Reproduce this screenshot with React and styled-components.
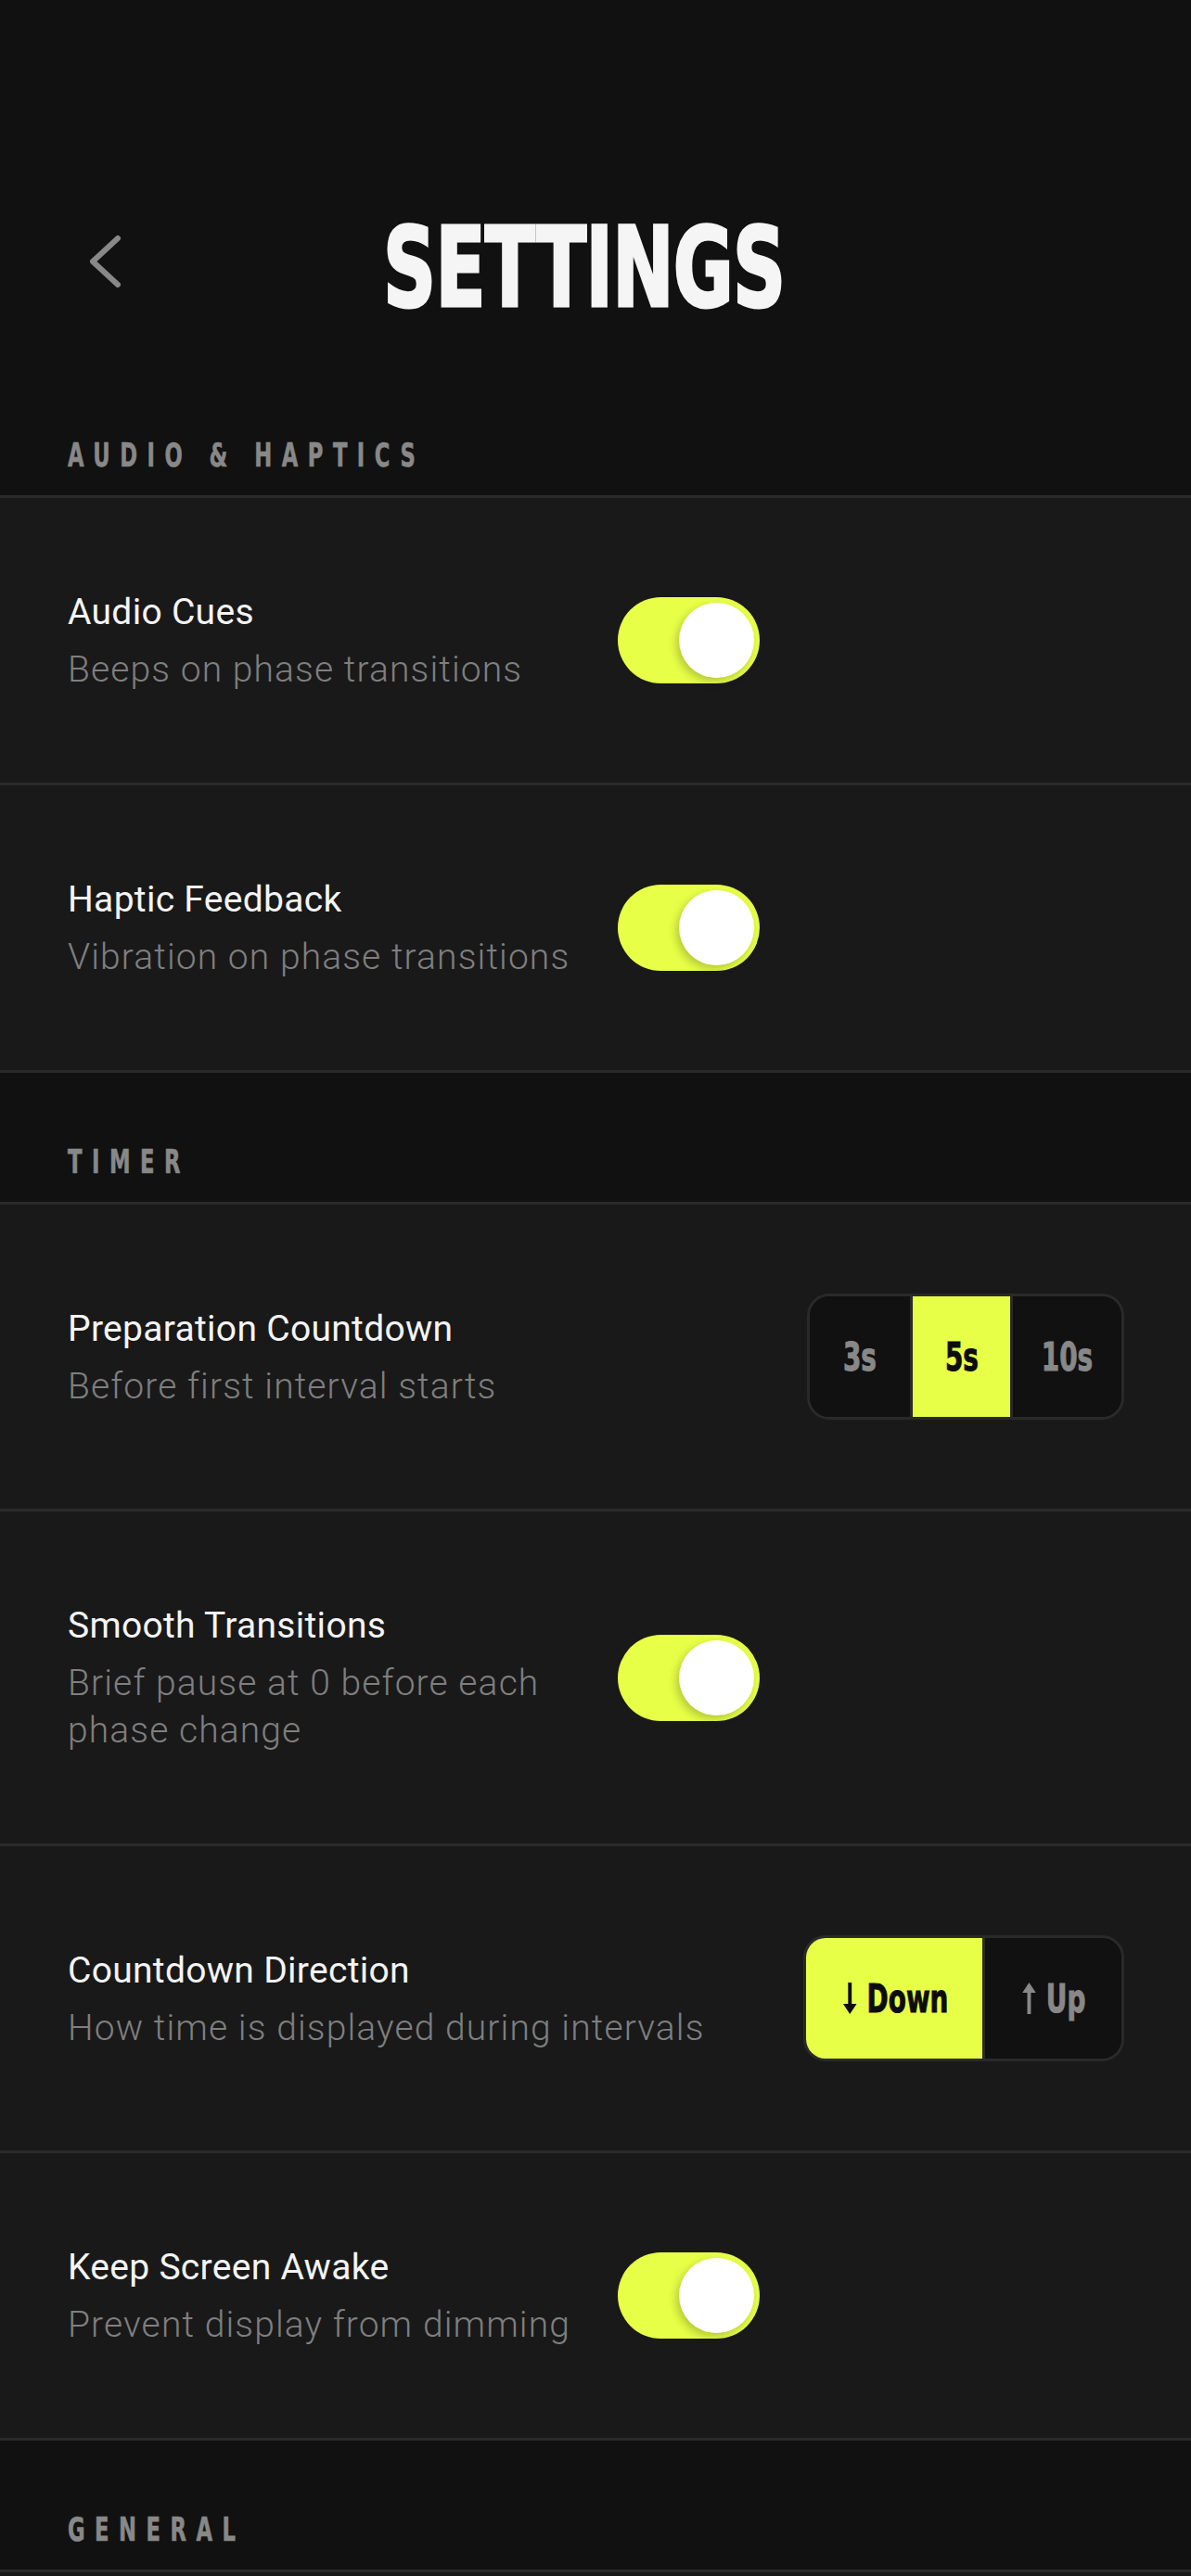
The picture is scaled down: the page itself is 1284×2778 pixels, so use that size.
import React from "react";
import styled, { createGlobalStyle } from "styled-components";

const COND = `"DejaVu Sans Condensed", "DejaVu Sans", sans-serif`;
const BODY = `Roboto, "Liberation Sans", sans-serif`;
const ACCENT = "#e7ff47";

const GlobalStyle = createGlobalStyle`
  html, body { margin: 0; padding: 0; background: #111111; }
  body { font-family: ${BODY}; -webkit-font-smoothing: antialiased; }
  *, *::before, *::after { box-sizing: border-box; }
  button { font: inherit; }
`;

const Page = styled.div`
  min-height: 2778px;
  background: #111111;
`;

const Header = styled.header`
  display: grid;
  grid-template-columns: 132px 1fr 156px;
  align-items: start;
  padding: 230px 72px 46px;
`;

const BackButton = styled.button`
  background: none;
  border: 0;
  padding: 23px 0 0 24px;
  display: flex;
  justify-content: flex-start;
  cursor: pointer;
  color: #888888;
  svg { display: block; }
`;

const Title = styled.h1`
  margin: 0;
  text-align: center;
  font-family: ${COND};
  font-weight: 700;
  font-size: 119px;
  line-height: 119px;
  color: #f5f5f5;
`;

const TitleText = styled.span`
  display: inline-block;
  letter-spacing: -1px;
  -webkit-text-stroke: 3px #f5f5f5;
  transform: scaleX(0.74);
  transform-origin: center;
`;

const SectionLabel = styled.h2`
  margin: 0;
  padding: 74px 73px 21px;
  font-family: ${COND};
  font-weight: 700;
  font-size: 36px;
  line-height: 44px;
  color: #888888;
  text-transform: uppercase;
  white-space: nowrap;
`;

const LabelText = styled.span`
  display: inline-block;
  letter-spacing: 15px;
  -webkit-text-stroke: 0.6px #888888;
  transform: scaleX(0.7);
  transform-origin: left center;
`;

const Group = styled.div`
  border-top: 3px solid #2a2a2a;
`;

const Row = styled.div`
  display: flex;
  align-items: center;
  gap: 48px;
  min-height: ${(p) => (p.$placeholder ? "306px" : "0")};
  padding: 96px 72px 96px 73px;
  background: #191919;
  border-bottom: 3px solid #2a2a2a;
`;

const TextBlock = styled.div`
  flex: 1 1 0;
  min-width: 0;
  display: flex;
  flex-direction: column;
  gap: 10px;
`;

const RowTitle = styled.div`
  font-family: ${BODY};
  font-size: 39px;
  line-height: 54px;
  font-weight: 400;
  letter-spacing: 0.3px;
  color: #f4f4f4;
`;

const RowSub = styled.div`
  font-family: ${BODY};
  font-size: 39px;
  line-height: 51px;
  font-weight: 300;
  letter-spacing: 1.1px;
  color: #7f7f7f;
`;

const ControlSlot = styled.div`
  flex: ${(p) => (p.$wide ? "0 0 546px" : "0 0 auto")};
  display: flex;
  justify-content: flex-start;
`;

const Track = styled.button`
  width: 153px;
  height: 93px;
  border-radius: 47px;
  border: 0;
  padding: 6px;
  background: ${(p) => (p.$on ? ACCENT : "#333333")};
  display: flex;
  align-items: center;
  justify-content: ${(p) => (p.$on ? "flex-end" : "flex-start")};
  cursor: pointer;
`;

const Knob = styled.span`
  width: 81px;
  height: 81px;
  border-radius: 50%;
  background: #ffffff;
  box-shadow: -3px 4px 10px rgba(0, 0, 0, 0.22);
`;

const Segmented = styled.div`
  display: flex;
  height: 136px;
  border: 3px solid #2a2a2a;
  border-radius: 24px;
  overflow: hidden;
  background: #111111;
`;

const Segment = styled.button`
  border: 0;
  margin: 0;
  padding: 0;
  width: ${(p) => p.$w}px;
  height: 100%;
  display: flex;
  align-items: center;
  justify-content: center;
  font-family: ${COND};
  font-weight: 700;
  font-size: 43px;
  line-height: 1;
  color: ${(p) => (p.$active ? "#0d0d0d" : "#888888")};
  background: ${(p) => (p.$active ? ACCENT : "#111111")};
  cursor: pointer;
  & + & { border-left: 3px solid #2a2a2a; }
`;

const SegLabel = styled.span`
  display: inline-flex;
  align-items: center;
  gap: 12px;
  white-space: nowrap;
  -webkit-text-stroke: 1px currentColor;
  transform: scaleX(0.72);
  transform-origin: center;
  svg { display: block; }
`;

const Chevron = () => (
  <svg width="36" height="58" viewBox="0 0 36 58" fill="none">
    <polyline
      points="31,4 4,29 31,54"
      stroke="currentColor"
      strokeWidth="6"
      strokeLinecap="round"
      strokeLinejoin="round"
    />
  </svg>
);

const Arrow = ({ up }) => (
  <svg width="27" height="36" viewBox="0 0 20 36" preserveAspectRatio="none">
    <g transform={up ? "rotate(180 10 18)" : undefined}>
      <line x1="10" y1="1" x2="10" y2="27" stroke="currentColor" strokeWidth="4" />
      <path d="M2.5 24 L10 35 L17.5 24 Z" fill="currentColor" />
    </g>
  </svg>
);

const Toggle = ({ on }) => (
  <Track $on={on} aria-pressed={on}>
    <Knob />
  </Track>
);

const Setting = ({ title, sub, children, wide }) => (
  <Row>
    <TextBlock>
      <RowTitle>{title}</RowTitle>
      <RowSub>{sub}</RowSub>
    </TextBlock>
    <ControlSlot $wide={wide}>{children}</ControlSlot>
  </Row>
);

const Section = ({ label, children }) => (
  <section>
    <SectionLabel>
      <LabelText>{label}</LabelText>
    </SectionLabel>
    <Group>{children}</Group>
  </section>
);

export default function App() {
  return (
    <>
      <GlobalStyle />
      <Page>
        <Header>
          <BackButton aria-label="Back">
            <Chevron />
          </BackButton>
          <Title>
            <TitleText>SETTINGS</TitleText>
          </Title>
          <span />
        </Header>

        <Section label="Audio & Haptics">
          <Setting title="Audio Cues" sub="Beeps on phase transitions" wide>
            <Toggle on />
          </Setting>
          <Setting title="Haptic Feedback" sub="Vibration on phase transitions" wide>
            <Toggle on />
          </Setting>
        </Section>

        <Section label="Timer">
          <Setting title="Preparation Countdown" sub="Before first interval starts">
            <Segmented>
              <Segment $w={108}><SegLabel>3s</SegLabel></Segment>
              <Segment $w={108} $active><SegLabel>5s</SegLabel></Segment>
              <Segment $w={120}><SegLabel>10s</SegLabel></Segment>
            </Segmented>
          </Setting>
          <Setting title="Smooth Transitions" sub="Brief pause at 0 before each phase change" wide>
            <Toggle on />
          </Setting>
          <Setting title="Countdown Direction" sub="How time is displayed during intervals">
            <Segmented>
              <Segment $w={190} $active>
                <SegLabel><Arrow />Down</SegLabel>
              </Segment>
              <Segment $w={150}>
                <SegLabel><Arrow up />Up</SegLabel>
              </Segment>
            </Segmented>
          </Setting>
          <Setting title="Keep Screen Awake" sub="Prevent display from dimming" wide>
            <Toggle on />
          </Setting>
        </Section>

        <Section label="General">
          <Row $placeholder />
        </Section>
      </Page>
    </>
  );
}
